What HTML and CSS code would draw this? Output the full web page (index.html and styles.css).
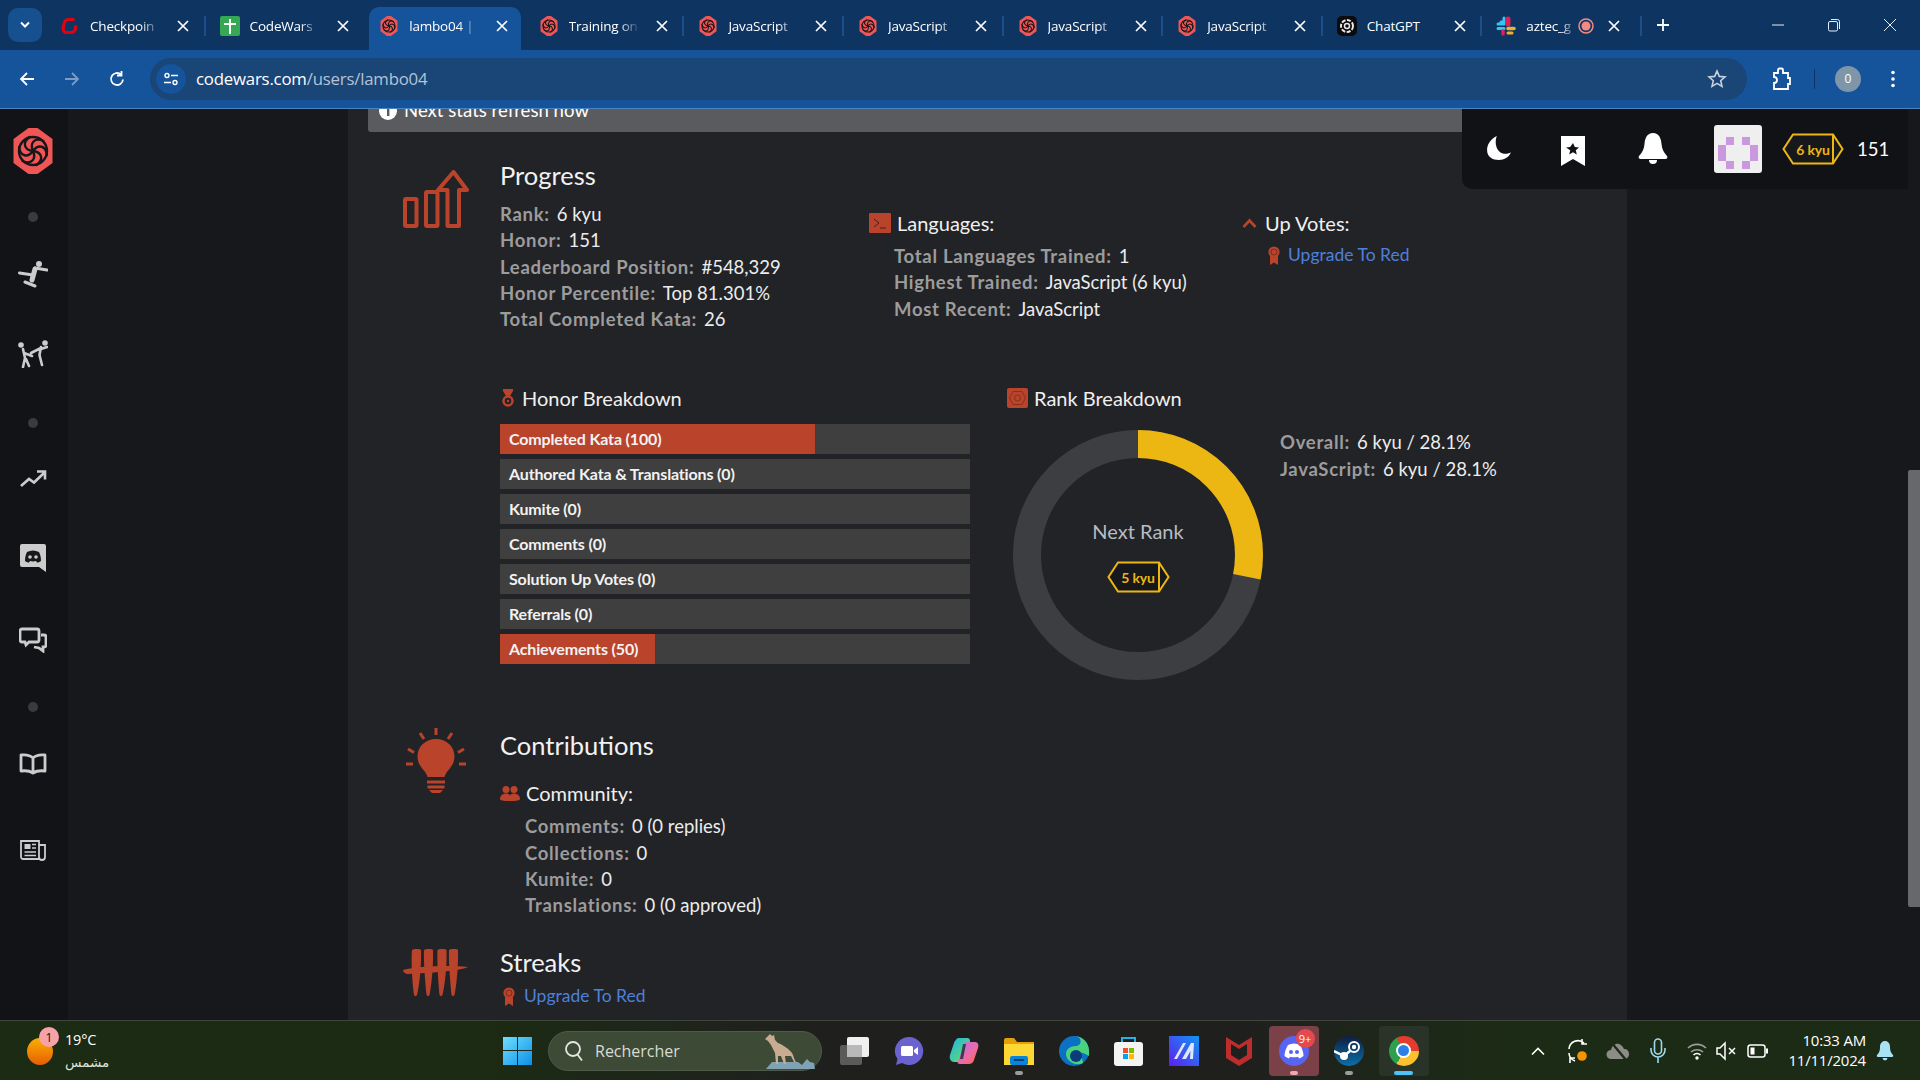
FILE: index.html
```html
<!DOCTYPE html>
<html lang="en">
<head>
<meta charset="utf-8">
<title>lambo04 | Codewars</title>
<link rel="stylesheet" href="styles.css">
</head>
<body>
<svg class="defs" aria-hidden="true">
  <symbol id="cw" viewBox="0 0 41 46">
    <polygon points="16,0 25,0 40,11 40,35 25,46 16,46 1,35 1,11" fill="#f05656"/>
    <g fill="none" stroke="#17171a" stroke-width="2.4" stroke-linecap="round">
      <circle cx="20.5" cy="23" r="14"/>
      <path d="M20.5 23C17 15 22 9 31 13"/>
      <path d="M20.5 23C17 15 22 9 31 13" transform="rotate(60 20.5 23)"/>
      <path d="M20.5 23C17 15 22 9 31 13" transform="rotate(120 20.5 23)"/>
      <path d="M20.5 23C17 15 22 9 31 13" transform="rotate(180 20.5 23)"/>
      <path d="M20.5 23C17 15 22 9 31 13" transform="rotate(240 20.5 23)"/>
      <path d="M20.5 23C17 15 22 9 31 13" transform="rotate(300 20.5 23)"/>
    </g>
  </symbol>
  <symbol id="x" viewBox="0 0 14 14">
    <path d="M2 2l10 10M12 2L2 12" stroke="#fff" stroke-width="1.7" fill="none"/>
  </symbol>
  <symbol id="ribbon" viewBox="0 0 12 19">
    <path d="M2 10v9l4-2.5 4 2.5v-9z" fill="#b9432b"/>
    <circle cx="6" cy="6" r="5.6" fill="#b9432b"/>
    <circle cx="6" cy="6" r="3" fill="none" stroke="#7c2c1d" stroke-width="1"/>
  </symbol>
</svg>

<div class="screen">
  <div class="tabstrip">
    <div class="tablist"><svg width="12" height="8" viewBox="0 0 12 8"><path d="M2 1.5l4 4 4-4" fill="none" stroke="#fff" stroke-width="2"/></svg></div>
    <div class="tab">
      <svg class="fav" viewBox="0 0 20 20"><path d="M14.5 3.5H9C6 3.5 4.500 5 4 8l-.8 4c-.5 3 1 4.500 3.800 4.500h4c2.500 0 3.800-1.200 4.300-3.500l.7-3.500" fill="none" stroke="#e3000f" stroke-width="3.200"/></svg>
      <span class="tab-title">Checkpoin</span><svg class="close"><use href="#x"/></svg><i class="sep"></i>
    </div>
    <div class="tab">
      <svg class="fav" viewBox="0 0 20 20"><rect width="20" height="20" rx="2" fill="#34a853"/><path d="M10 3v15M4 8h12" stroke="#fff" stroke-width="2"/></svg>
      <span class="tab-title">CodeWars</span><svg class="close"><use href="#x"/></svg><i class="sep sep-off"></i>
    </div>
    <div class="tab tab-active">
      <svg class="fav"><use href="#cw"/></svg>
      <span class="tab-title">lambo04 |</span><svg class="close"><use href="#x"/></svg><i class="sep sep-off"></i>
    </div>
    <div class="tab">
      <svg class="fav"><use href="#cw"/></svg>
      <span class="tab-title">Training on</span><svg class="close"><use href="#x"/></svg><i class="sep"></i>
    </div>
    <div class="tab">
      <svg class="fav"><use href="#cw"/></svg>
      <span class="tab-title">JavaScript</span><svg class="close"><use href="#x"/></svg><i class="sep"></i>
    </div>
    <div class="tab">
      <svg class="fav"><use href="#cw"/></svg>
      <span class="tab-title">JavaScript</span><svg class="close"><use href="#x"/></svg><i class="sep"></i>
    </div>
    <div class="tab">
      <svg class="fav"><use href="#cw"/></svg>
      <span class="tab-title">JavaScript</span><svg class="close"><use href="#x"/></svg><i class="sep"></i>
    </div>
    <div class="tab">
      <svg class="fav"><use href="#cw"/></svg>
      <span class="tab-title">JavaScript</span><svg class="close"><use href="#x"/></svg><i class="sep"></i>
    </div>
    <div class="tab">
      <svg class="fav" viewBox="0 0 20 20"><rect width="20" height="20" rx="5" fill="#0b0b0b"/><circle cx="10" cy="10" r="6" fill="none" stroke="#e8e8e8" stroke-width="2" stroke-dasharray="4 1.500"/><circle cx="10" cy="10" r="2.500" fill="none" stroke="#e8e8e8" stroke-width="1.500"/></svg>
      <span class="tab-title tab-title-full">ChatGPT</span><svg class="close"><use href="#x"/></svg><i class="sep"></i>
    </div>
    <div class="tab tab-narrow">
      <svg class="fav" viewBox="0 0 20 20"><path d="M8 2v4H5" fill="none" stroke="#36c5f0" stroke-width="3" stroke-linecap="round"/><path d="M2 8h6M2 12.500h6" stroke="#36c5f0" stroke-width="3" stroke-linecap="round"/><path d="M12 3v5" stroke="#e01e5a" stroke-width="5" stroke-linecap="round"/><path d="M12 12.500h6" stroke="#ecb22e" stroke-width="3.500" stroke-linecap="round"/><path d="M12 17h4" stroke="#ecb22e" stroke-width="3" stroke-linecap="round"/><path d="M7 15v3" stroke="#e01e5a" stroke-width="3.500" stroke-linecap="round"/></svg>
      <span class="tab-title tab-title-short">aztec_g</span>
      <svg class="rec" viewBox="0 0 16 16"><circle cx="8" cy="8" r="7" fill="none" stroke="#f28b82" stroke-width="1.500"/><circle cx="8" cy="8" r="4.500" fill="#f28b82"/></svg>
      <svg class="close"><use href="#x"/></svg><i class="sep"></i>
    </div>
    <svg class="plus" viewBox="0 0 14 14"><path d="M7 1v12M1 7h12" stroke="#fff" stroke-width="1.800"/></svg>
    <div class="winctl">
      <svg width="14" height="14" viewBox="0 0 14 14"><path d="M1 7h12" stroke="#e8edf3" stroke-width="1"/></svg>
      <svg width="14" height="14" viewBox="0 0 14 14"><rect x="1.500" y="3.500" width="9" height="9.500" rx="1.500" fill="none" stroke="#e8edf3"/><path d="M4 1.500h6.500a2 2 0 0 1 2 2V11" fill="none" stroke="#e8edf3"/></svg>
      <svg width="14" height="14" viewBox="0 0 14 14"><path d="M1 1l12 12M13 1L1 13" stroke="#e8edf3" stroke-width="1"/></svg>
    </div>
  </div>

  <div class="toolbar">
    <div class="navbtns">
      <svg width="18" height="18" viewBox="0 0 18 18"><path d="M16 9H3M9 3L3 9l6 6" fill="none" stroke="#fff" stroke-width="1.800"/></svg>
      <svg width="18" height="18" viewBox="0 0 18 18"><path d="M2 9h13M9 3l6 6-6 6" fill="none" stroke="#7d9cc4" stroke-width="1.800"/></svg>
      <svg width="18" height="18" viewBox="0 0 18 18"><path d="M15 9.500A6 6 0 1 1 13 4.500M13.500 1v4.500H9" fill="none" stroke="#fff" stroke-width="1.800"/></svg>
    </div>
    <div class="omnibox">
      <span class="siteinfo"><svg width="16" height="16" viewBox="0 0 16 16"><circle cx="4" cy="4.500" r="2" fill="none" stroke="#fff" stroke-width="1.400"/><path d="M8 4.500h7M1 11.500h7" stroke="#fff" stroke-width="1.400"/><circle cx="12" cy="11.500" r="2" fill="none" stroke="#fff" stroke-width="1.400"/></svg></span>
      <span class="url"><span class="url-host">codewars.com</span>/users/lambo04</span>
      <svg class="star" width="20" height="20" viewBox="0 0 20 20"><path d="M10 2l2.300 5.400 5.700.5-4.300 3.800 1.300 5.700-5-3-5 3 1.300-5.700L2 7.900l5.700-.5z" fill="none" stroke="#c7d0dc" stroke-width="1.600"/></svg>
    </div>
    <svg class="puzzle" width="22" height="24" viewBox="0 0 22 24"><path d="M4 6h4V3a1.500 1.500 0 0 1 1.500-1.500h2A1.500 1.500 0 0 1 13 3v3h5v5h2v6h-2v5H4v-6a3 3 0 0 0 0-6z" fill="none" stroke="#fff" stroke-width="1.800"/></svg>
    <i class="tb-div"></i>
    <span class="profile">0</span>
    <svg class="kebab" width="6" height="20" viewBox="0 0 6 20"><circle cx="3" cy="3.500" r="1.800" fill="#fff"/><circle cx="3" cy="10" r="1.800" fill="#fff"/><circle cx="3" cy="16.500" r="1.800" fill="#fff"/></svg>
  </div>

  <div class="page">
    <nav class="rail">
      <svg class="logo"><use href="#cw"/></svg>
      <i class="dot"></i>
      <span class="slot"><svg width="30" height="28" viewBox="0 0 30 28"><circle cx="21" cy="4" r="3" fill="#ccc"/><path d="M17 9L14 20" fill="none" stroke="#ccc" stroke-width="5" stroke-linecap="round"/><path d="M1.500 13L15 15M7 22l10 4M17 8l12 2" fill="none" stroke="#ccc" stroke-width="3" stroke-linecap="round"/></svg></span>
      <span class="slot"><svg width="30" height="28" viewBox="0 0 30 28"><circle cx="3" cy="5" r="2.800" fill="#ccc"/><circle cx="27" cy="3" r="2.800" fill="#ccc"/><path d="M5 9l2 9-2 9M6 13l8 3M8 19l3 7M23 7l-1.500 8 2.500 10M23 8l-10 5M29 7l-6 2" fill="none" stroke="#ccc" stroke-width="2.600" stroke-linecap="round"/></svg></span>
      <i class="dot"></i>
      <span class="slot"><svg width="28" height="20" viewBox="0 0 28 20"><path d="M2 17l8-7 5 3.500L25 4M18 2.500h8v8" fill="none" stroke="#ccc" stroke-width="2.600"/></svg></span>
      <span class="slot"><svg width="28" height="30" viewBox="0 0 28 30"><path d="M3 1h22a2 2 0 0 1 2 2v26l-7-5H3a2 2 0 0 1-2-2V3a2 2 0 0 1 2-2z" fill="#ccc"/><path d="M8 9c4-2 8-2 12 0 1.500 3 2 6 2 9-1.500 1-3 1.500-4 1.500l-1-1.500c-2 .5-4 .5-6 0L10 19.500c-1 0-2.500-.5-4-1.500 0-3 .5-6 2-9z" fill="#17181c"/><circle cx="11" cy="14" r="1.800" fill="#ccc"/><circle cx="17" cy="14" r="1.800" fill="#ccc"/></svg></span>
      <span class="slot"><svg width="28" height="26" viewBox="0 0 28 26"><path d="M3 2h15a2 2 0 0 1 2 2v9a2 2 0 0 1-2 2H10l-3 3-1-3H3a2 2 0 0 1-2-2V4a2 2 0 0 1 2-2z" fill="none" stroke="#ccc" stroke-width="2.800"/><path d="M22 8h3a2 2 0 0 1 2 2v8a2 2 0 0 1-2 2h-1v4l-4-3-5-1" fill="none" stroke="#ccc" stroke-width="2.800"/></svg></span>
      <i class="dot"></i>
      <span class="slot"><svg width="28" height="22" viewBox="0 0 28 22"><path d="M14 5c-3-3-8-3.500-12-3v16c4-.5 9 0 12 2 3-2 8-2.500 12-2V2c-4-.5-9 0-12 3zM14 5v15" fill="none" stroke="#ccc" stroke-width="2.800" stroke-linejoin="round"/></svg></span>
      <span class="slot"><svg width="26" height="24" viewBox="0 0 26 24"><path d="M19 21H3a2 2 0 0 1-2-2V3h18v18zM19 7h6v12a2 2 0 0 1-6 0" fill="none" stroke="#ccc" stroke-width="1.800"/><rect x="4.500" y="6" width="6" height="5" fill="#ccc"/><path d="M12 6.500h4M12 10h4M4.500 14h11.500M4.500 17.500h11.500" stroke="#ccc" stroke-width="1.600"/></svg></span>
    </nav>
    <div class="gutter"></div>

    <main class="main">
      <div class="notice">
        <svg width="18" height="18" viewBox="0 0 18 18"><circle cx="9" cy="9" r="9" fill="#fff"/><rect x="8" y="7" width="2.400" height="7" fill="#5a5b5f"/><circle cx="9.200" cy="4.500" r="1.400" fill="#5a5b5f"/></svg>
        <span>Next stats refresh now</span>
      </div>

      <section class="section section-progress">
        <div class="sec-icon">
          <svg width="66" height="58" viewBox="0 0 66 58"><g fill="none" stroke="#b9432b" stroke-width="4" stroke-linejoin="round"><rect x="2" y="29" width="11.500" height="27" rx="1"/><rect x="23" y="22" width="11.500" height="34" rx="1"/><path d="M44.500 20H35L50.500 2 64 20H56v36H44.500z"/></g></svg>
        </div>
        <div>
          <h2 class="sec-title">Progress</h2>
          <div class="stats-row">
            <div class="col-main">
              <div class="stat"><b>Rank:</b>6 kyu</div>
              <div class="stat"><b>Honor:</b>151</div>
              <div class="stat"><b>Leaderboard Position:</b>#548,329</div>
              <div class="stat"><b>Honor Percentile:</b>Top 81.301%</div>
              <div class="stat"><b>Total Completed Kata:</b>26</div>
            </div>
            <div class="col-lang">
              <h3 class="sub-title"><svg width="22" height="20" viewBox="0 0 22 20"><rect width="22" height="20" rx="1" fill="#b9432b"/><path d="M5 6l5 4-5 4M11 15h6" fill="none" stroke="#46201a" stroke-width="1"/></svg>Languages:</h3>
              <div class="indent">
                <div class="stat"><b>Total Languages Trained:</b>1</div>
                <div class="stat"><b>Highest Trained:</b>JavaScript (6 kyu)</div>
                <div class="stat"><b>Most Recent:</b>JavaScript</div>
              </div>
            </div>
            <div class="col-votes">
              <h3 class="sub-title sub-votes"><svg width="15" height="10" viewBox="0 0 15 10"><path d="M1.500 9l6-6.500 6 6.500" fill="none" stroke="#b9432b" stroke-width="2.600"/></svg>Up Votes:</h3>
              <a class="upgrade upgrade-votes"><svg width="12" height="19"><use href="#ribbon"/></svg>Upgrade To Red</a>
            </div>
          </div>
        </div>
      </section>

      <section class="section section-break">
        <div></div>
        <div class="break-row">
          <div class="honor">
            <h3 class="sub-title sub-honor"><svg width="14" height="18" viewBox="0 0 14 18"><path d="M2 0h10v2L9 7H5L2 2z" fill="#b9432b"/><circle cx="7" cy="12" r="4.500" fill="none" stroke="#b9432b" stroke-width="2.500"/><circle cx="7" cy="12" r="1.200" fill="#b9432b"/></svg>Honor Breakdown</h3>
            <div class="bars">
              <div class="bar"><div class="fill fill-67">Completed Kata (100)</div></div>
              <div class="bar"><div class="fill fill-0">Authored Kata &amp; Translations (0)</div></div>
              <div class="bar"><div class="fill fill-0">Kumite (0)</div></div>
              <div class="bar"><div class="fill fill-0">Comments (0)</div></div>
              <div class="bar"><div class="fill fill-0">Solution Up Votes (0)</div></div>
              <div class="bar"><div class="fill fill-0">Referrals (0)</div></div>
              <div class="bar"><div class="fill fill-33">Achievements (50)</div></div>
            </div>
          </div>
          <div class="rank">
            <h3 class="sub-title"><svg width="21" height="20" viewBox="0 0 21 20"><rect width="21" height="20" rx="2" fill="#b9432b"/><path d="M6 3.500h9l3.500 6.500-3.500 6.500H6L2.500 10z" fill="none" stroke="#8a2f1e" stroke-width="1"/><circle cx="10.500" cy="10" r="3" fill="none" stroke="#8a2f1e" stroke-width="1"/></svg>Rank Breakdown</h3>
            <div class="rank-body">
              <div class="donut">
                <svg class="donut-ring" width="250" height="250" viewBox="0 0 250 250"><circle cx="125" cy="125" r="111" fill="none" stroke="#3d3e42" stroke-width="28"/><circle cx="125" cy="125" r="111" fill="none" stroke="#ecb613" stroke-width="28" stroke-dasharray="196 701" transform="rotate(-90 125 125)"/></svg>
                <div class="donut-center">
                  <div class="next">Next Rank</div>
                  <div class="kyu kyu-next">
                    <svg width="63" height="32" viewBox="0 0 63 32"><path d="M11 1.500H52L61.500 16 52 30.500H11L1.500 16z" fill="#17181c" stroke="#ecb613" stroke-width="2"/><path d="M52 1.500v29" stroke="#ecb613" stroke-width="2"/></svg>
                    <span>5 kyu</span>
                  </div>
                </div>
              </div>
              <div class="rank-stats">
                <div class="stat"><b>Overall:</b>6 kyu / 28.1%</div>
                <div class="stat"><b>JavaScript:</b>6 kyu / 28.1%</div>
              </div>
            </div>
          </div>
        </div>
      </section>

      <section class="section section-contrib">
        <div class="sec-icon">
          <svg width="66" height="66" viewBox="0 0 66 66"><g stroke="#b9432b" stroke-width="3" fill="none"><path d="M33 0v7M17 5l4 6M49 5l-4 6M5 21l6 3.500M61 21l-6 3.500M3 36h7M63 36h-7"/></g><path d="M33 11c10.500 0 18.500 7.500 18.500 17.500 0 6-3 10-6 13.500-2.500 3-3.500 5-4 7h-17c-.5-2-1.500-4-4-7-3-3.500-6-7.500-6-13.500C14.500 18.500 22.500 11 33 11z" fill="#b9432b"/><path d="M24 54h18M24.500 59h17" stroke="#b9432b" stroke-width="3"/><path d="M26 62h14l-3 3h-8z" fill="#b9432b"/></svg>
        </div>
        <div>
          <h2 class="sec-title">Contributions</h2>
          <h3 class="sub-title sub-comm"><svg width="20" height="16" viewBox="0 0 20 16"><circle cx="6" cy="4.500" r="3.500" fill="#b9432b"/><circle cx="14" cy="4.500" r="3.500" fill="#b9432b"/><path d="M0 14c0-3 2-5 5-5.500h2c2.500.5 3 2 3 2s.5-1.500 3-2h2c3 .5 5 2.500 5 5.500 0 1.500-3 2-10 2S0 15.500 0 14z" fill="#b9432b"/></svg>Community:</h3>
          <div class="indent">
            <div class="stat"><b>Comments:</b>0 (0 replies)</div>
            <div class="stat"><b>Collections:</b>0</div>
            <div class="stat"><b>Kumite:</b>0</div>
            <div class="stat"><b>Translations:</b>0 (0 approved)</div>
          </div>
        </div>
      </section>

      <section class="section section-streaks">
        <div class="sec-icon sec-icon-tally">
          <svg width="66" height="48" viewBox="0 0 66 48"><g fill="#b9432b"><path d="M9 1c3-1.500 7-1.500 9 0 .5 12-1 32-4 45-1 1.500-2 1.500-3 0C9 32 8 12 9 1z"/><path d="M21 1c3-1.500 7-1.500 9 0 .5 12-1 32-3.500 45-1 1.500-2 1.500-3 0C22 32 20.500 12 21 1z"/><path d="M34.500 1c3-1.500 7-1.500 9 0 .5 12-1 32-4 45-1 1.500-2 1.500-3 0C35 32 34 12 34.500 1z"/><path d="M46 1c3-1.500 7-1.500 9 0 .5 12-1 32-3.500 45-1 1.500-2 1.500-3 0C47 32 45.500 12 46 1z"/><path d="M0 21C15 17 45 16 65 18c-8 4-40 6-60 7-3 0-5-2-5-4z"/></g></svg>
        </div>
        <div>
          <h2 class="sec-title">Streaks</h2>
          <a class="upgrade upgrade-streaks"><svg width="12" height="19"><use href="#ribbon"/></svg>Upgrade To Red</a>
        </div>
      </section>
    </main>

    <div class="gutter gutter-right"></div>
    <div class="scrollbar"><div class="thumb"></div></div>

    <div class="userpanel">
      <svg width="26" height="26" viewBox="0 0 24 24"><path d="M10 1C4 4 1 9 1 14c0 6 5 9 11 9 5 0 9-2 11-7-3 2-8 2-11-1C9 12 8 6 10 1z" fill="#fff"/></svg>
      <svg class="up-book" width="24" height="30" viewBox="0 0 24 30"><path d="M0 0h24v30l-12-7-12 7z" fill="#fff"/><path d="M12 7l1.800 4 4.200.4-3.200 2.800 1 4.300-3.800-2.300-3.800 2.300 1-4.300L5 11.400l4.200-.4z" fill="#111216"/></svg>
      <svg class="up-bell" width="30" height="32" viewBox="0 0 30 32"><path d="M15 0c6 0 8 5 8.500 11 .5 5 2 8 5.500 12 1 1.500 0 3-1.500 3h-25C1 26 0 24.500 1 23c3.500-4 5-7 5.500-12C7 5 9 0 15 0z" fill="#fff"/><path d="M11 27h8a4 4 0 0 1-8 0z" fill="#fff"/></svg>
      <div class="avatar">
        <i class="px px-a"></i><i class="px px-b"></i><i class="px px-c"></i><i class="px px-d"></i><i class="px px-e"></i><i class="px px-f"></i>
      </div>
      <div class="kyu kyu-user">
        <svg width="62" height="32" viewBox="0 0 62 32"><path d="M11 1.500H51L60.500 16 51 30.500H11L1.500 16z" fill="#17181c" stroke="#ecb613" stroke-width="2"/><path d="M51 1.500v29" stroke="#ecb613" stroke-width="2"/></svg>
        <span>6 kyu</span>
      </div>
      <span class="honor-num">151</span>
    </div>
  </div>

  <footer class="taskbar">
    <div class="weather">
      <div class="wx-icon"><span class="wx-badge">1</span></div>
      <div class="wx-text"><span>19°C</span><span class="wx-ar">مشمس</span></div>
    </div>
    <svg class="winlogo" width="29" height="29" viewBox="0 0 29 29"><defs><linearGradient id="w" x1="0" y1="0" x2="1" y2="1"><stop offset="0" stop-color="#6fe0ff"/><stop offset="1" stop-color="#0d8fe8"/></linearGradient></defs><path d="M0 1h14v13H0zM15 1h14v13H15zM0 15h14v14H0zM15 15h14v14H15z" fill="url(#w)"/></svg>
    <div class="search">
      <svg width="20" height="22" viewBox="0 0 20 22"><circle cx="9" cy="9" r="7" fill="none" stroke="#e5e8e1" stroke-width="1.800"/><path d="M13.500 14.500l4.500 6" stroke="#e5e8e1" stroke-width="1.800"/></svg>
      <span class="search-text">Rechercher</span>
      <svg class="wolf" width="50" height="38" viewBox="0 0 50 38"><path d="M1 37l6-7h26l4 3 5-6 3 3 4 1 1 6z" fill="#7fa3b5"/><path d="M5 2l2 2 2-1 1 5 3 3c5 2 11 6 14 10 2 3 2 7 4 9h-2l-3-6-6 0 1 8h-2l-3-8-3 0 0 8h-2l-1-11-4-8-3-4-3-2z" fill="#c8ab90"/></svg>
    </div>
    <div class="apps">
      <span class="app"><svg width="30" height="30" viewBox="0 0 30 30"><rect x="1" y="9" width="22" height="20" rx="2" fill="#5b5b5b"/><rect x="8" y="1" width="22" height="20" rx="2" fill="#f0f0f0"/><rect x="8" y="9" width="15" height="12" fill="#b9b9b9"/></svg></span>
      <span class="app"><svg width="30" height="30" viewBox="0 0 30 30"><path d="M15 1a14 14 0 1 1-7 26l-6 2 1.500-6A14 14 0 0 1 15 1z" fill="#6a63cf"/><rect x="7" y="10" width="12" height="10" rx="1.500" fill="#fff"/><path d="M20 14l4-3v8l-4-3z" fill="#fff"/></svg></span>
      <span class="app"><svg width="30" height="30" viewBox="0 0 30 30"><defs><linearGradient id="cpa" x1="0" y1="0" x2="1" y2="1"><stop offset="0" stop-color="#20b0f0"/><stop offset=".6" stop-color="#4bd28f"/><stop offset="1" stop-color="#f4c21f"/></linearGradient><linearGradient id="cpb" x1="0" y1="0" x2="1" y2="1"><stop offset="0" stop-color="#b06ff0"/><stop offset=".6" stop-color="#f06aa0"/><stop offset="1" stop-color="#f26a32"/></linearGradient></defs><path d="M10 2h8c2 0 3 1 3 3l-5 19c-.5 1.500-2 2-3 2H5c-3 0-5-3-4-7L5 7c1-3 3-5 5-5z" fill="url(#cpa)"/><path d="M16 6h10c3 0 4 3 3 6l-4 12c-1 3-3 4-5 4h-9c-2 0-3-1-2-3z" fill="url(#cpb)"/><path d="M14 8h3l-3 15h-3z" fill="#1e2a30" opacity=".8"/></svg></span>
      <span class="app"><svg width="30" height="28" viewBox="0 0 30 28"><path d="M0 3a2 2 0 0 1 2-2h8l3 4h17v5H0z" fill="#e3a008"/><path d="M0 7h30v21H0z" fill="#fdd835"/><rect x="6" y="19" width="18" height="9" rx="2" fill="#0a84d6"/><rect x="10" y="22" width="10" height="2" fill="#073f78"/></svg><i class="pip"></i></span>
      <span class="app"><svg width="30" height="30" viewBox="0 0 30 30"><circle cx="15" cy="15" r="15" fill="#0c71c3"/><path d="M30 15c0-8-6-15-15-15C24 0 23 10 17 10c-8 0-12 6-9 12 3 5 10 8 16 5l-1-5c-5 3-9 0-8-3 1-3 8-4 15 1z" fill="#4ad37c"/><circle cx="17" cy="20" r="6" fill="#0a3d7a"/></svg></span>
      <span class="app"><svg width="29" height="30" viewBox="0 0 29 30"><rect x="0" y="6" width="29" height="24" rx="3" fill="#f4f4f4"/><path d="M8 6V2h13v4" fill="none" stroke="#22b3e6" stroke-width="2"/><rect x="9" y="12" width="5" height="5" fill="#f25022"/><rect x="15" y="12" width="5" height="5" fill="#7fba00"/><rect x="9" y="18" width="5" height="5" fill="#00a4ef"/><rect x="15" y="18" width="5" height="5" fill="#ffb900"/></svg></span>
      <span class="app"><svg width="30" height="30" viewBox="0 0 30 30"><defs><linearGradient id="mg" x1="0" y1="1" x2="1" y2="0"><stop offset="0" stop-color="#5f1cf5"/><stop offset="1" stop-color="#1296f0"/></linearGradient></defs><rect width="30" height="30" fill="url(#mg)"/><path d="M5 23l9-16h3L8 23zM13 23l9-16h3l-1 16h-3l.5-8-4.500 8z" fill="#dfe7ff"/></svg></span>
      <span class="app"><svg width="28" height="30" viewBox="0 0 28 30"><path d="M1 1l6.500 4L14 9l6.500-4L27 1v21l-13 8-13-8zM6 8v11l8 5 8-5V8l-8 5z" fill="#bd2d2b" fill-rule="evenodd"/></svg></span>
      <span class="app app-box app-discord">
        <span class="discord-mark"><svg width="20" height="16" viewBox="0 0 20 16"><path d="M4 2c4-2 8-2 12 0 2 3 3.500 7 3.500 11-1.500 1.200-3 2-4.500 2.500l-1-1.800c-3 .8-5 .8-8 0l-1 1.800C3.500 15 2 14.200.5 13 .5 9 2 5 4 2z" fill="#fff"/><circle cx="7" cy="9" r="2" fill="#5865f2"/><circle cx="13" cy="9" r="2" fill="#5865f2"/></svg></span>
        <span class="discord-badge">9+</span>
        <i class="pip pip-pink"></i>
      </span>
      <span class="app app-steam"><svg width="30" height="30" viewBox="0 0 30 30"><defs><linearGradient id="st" x1="0" y1="0" x2="0" y2="1"><stop offset="0" stop-color="#0f1e42"/><stop offset="1" stop-color="#0b6fa8"/></linearGradient></defs><circle cx="15" cy="15" r="15" fill="url(#st)"/><circle cx="20" cy="11" r="5" fill="none" stroke="#fff" stroke-width="2"/><circle cx="20" cy="11" r="2.200" fill="#fff"/><circle cx="10" cy="20" r="4" fill="#fff"/><path d="M0 15l10 5 6-5" stroke="#fff" stroke-width="2.500" fill="none"/></svg><i class="pip"></i></span>
      <span class="app app-box app-chrome"><span class="chrome"><span class="chrome-eye"></span></span><i class="pip pip-blue"></i></span>
    </div>
    <div class="tray">
      <span class="tray-i"><svg width="14" height="10" viewBox="0 0 14 10"><path d="M1 8.500l6-6 6 6" fill="none" stroke="#fff" stroke-width="1.600"/></svg></span>
      <span class="tray-i"><svg width="24" height="26" viewBox="0 0 24 26"><path d="M3 11A9 9 0 0 1 18 5M16 1v5h5M3 15a9 9 0 0 0 6 8M4 25v-5h5" fill="none" stroke="#fff" stroke-width="1.600"/><circle cx="16" cy="18" r="4.800" fill="#f59300"/></svg></span>
      <span class="tray-i"><svg width="24" height="20" viewBox="0 0 24 20"><path d="M5 18a4.500 4.500 0 0 1 0-9C6 4 10 2 13 3c3 1 4 3 5 5 3 0 5 2 5 5s-2 5-5 5z" fill="#8b8e86"/><path d="M5 1l15 18" stroke="#22291c" stroke-width="2.400"/></svg></span>
      <span class="tray-i"><svg width="16" height="26" viewBox="0 0 16 26"><rect x="4.500" y="1" width="7" height="15" rx="3.500" fill="none" stroke="#9fd9ef" stroke-width="1.600"/><path d="M1 10v2a7 7 0 0 0 14 0v-2M8 19v6" fill="none" stroke="#9fd9ef" stroke-width="1.600"/></svg></span>
      <span class="tray-i tray-narrow"><svg width="20" height="20" viewBox="0 0 20 20"><path d="M1 7a13 13 0 0 1 18 0M4 11a9 9 0 0 1 12 0" fill="none" stroke="#9aa097" stroke-width="1.600"/><path d="M6.500 14a5 5 0 0 1 7 0" fill="none" stroke="#fff" stroke-width="1.600"/><circle cx="10" cy="17" r="1.700" fill="#fff"/></svg></span>
      <span class="tray-i tray-narrow"><svg width="22" height="20" viewBox="0 0 22 20"><path d="M1 7h3l5-5v16l-5-5H1z" fill="none" stroke="#fff" stroke-width="1.500"/><path d="M13 7l6 6M19 7l-6 6" stroke="#fff" stroke-width="1.500"/></svg></span>
      <span class="tray-i tray-narrow"><svg width="22" height="14" viewBox="0 0 22 14"><rect x="1" y="1" width="17" height="12" rx="2.500" fill="none" stroke="#fff" stroke-width="1.500"/><rect x="3.500" y="3.500" width="4" height="7" fill="#fff"/><rect x="19" y="4.500" width="2" height="5" fill="#fff"/></svg></span>
      <div class="clock"><span>10:33 AM</span><span>11/11/2024</span></div>
      <svg class="tray-bell" width="18" height="20" viewBox="0 0 18 20"><path d="M9 0c3 0 5 2.500 5 6 0 4 1 6 3 8 .5 1 0 2-1 2H2c-1 0-1.500-1-1-2 2-2 3-4 3-8 0-3.500 2-6 5-6z" fill="#a8e3f5"/><path d="M6.500 17h5a2.500 2.500 0 0 1-5 0z" fill="#a8e3f5"/></svg>
    </div>
  </footer>
</div>
</body>
</html>
```
FILE: styles.css
```css
* { box-sizing: border-box; }
html, body { margin: 0; padding: 0; height: 1080px; overflow: hidden; background: #17181c; }
body { font-family: Lato, "Open Sans", sans-serif; }
.defs { position: absolute; width: 0; height: 0; }
.screen { display: flex; flex-direction: column; width: 1920px; height: 1080px; }

/* browser tab strip */
.tabstrip { height: 50px; flex: none; display: flex; align-items: flex-end; background: #0e3562; padding-left: 8px; font-family: "Open Sans", "Noto Sans", sans-serif; color: #fff; }
.tablist { width: 34px; height: 34px; margin: 0 4px 8px 0; border-radius: 10px; background: #16508f; display: flex; align-items: center; justify-content: center; }
.tab { width: 159.6px; height: 43px; display: flex; align-items: center; padding: 0 0 6px 14px; flex: none; border-radius: 10px 10px 0 0; }
.tab-active { width: 151.6px; margin: 0 4px; padding-left: 10px; background: #15539a; }
.fav { width: 20px; height: 20px; flex: none; }
.tab-title { width: 71px; margin-left: 10px; font-size: 13.5px; letter-spacing: -0.2px; white-space: nowrap; overflow: hidden; -webkit-mask-image: linear-gradient(90deg, #000 70%, transparent); mask-image: linear-gradient(90deg, #000 70%, transparent); }
.tab-title-full { -webkit-mask-image: none; mask-image: none; }
.tab-title-short { width: 50px; }
.rec { width: 16px; height: 16px; margin-left: 2px; flex: none; }
.close { width: 14px; height: 14px; margin-left: 15px; flex: none; }
.tab-narrow .close { margin-left: 13px; }
.sep { width: 2px; height: 20px; margin-left: auto; background: #1b4f8c; flex: none; }
.sep-off { background: transparent; }
.plus { width: 14px; height: 14px; margin: 0 0 18px 14px; flex: none; }
.winctl { margin-left: 101px; display: flex; gap: 42px; padding-bottom: 18px; }

/* browser toolbar */
.toolbar { height: 59px; flex: none; display: flex; align-items: center; background: #15539a; border-bottom: 1px solid #4c82bd; padding: 0 0 1px 0; }
.navbtns { width: 150px; padding-left: 18px; display: flex; gap: 27px; }
.omnibox { width: 1597px; height: 42px; border-radius: 21px; background: #1a4577; display: flex; align-items: center; padding-left: 6px; }
.siteinfo { width: 30px; height: 30px; border-radius: 50%; background: #15539a; display: flex; align-items: center; justify-content: center; }
.url { margin-left: 10px; font-family: "Open Sans", sans-serif; font-size: 16.800px; letter-spacing: -0.2px; color: #b5c3d4; }
.url-host { color: #fff; }
.star { margin-left: auto; margin-right: 20px; }
.puzzle { margin-left: 23px; }
.tb-div { width: 1px; height: 20px; background: #0e3562; margin-left: 22px; }
.profile { width: 26px; height: 26px; margin-left: 20px; border-radius: 50%; background: #7f96a9; color: #fff; font: 12px "Open Sans", sans-serif; display: flex; align-items: center; justify-content: center; }
.kebab { margin-left: 29px; }

/* page */
.page { position: relative; flex: 1; min-height: 0; display: flex; overflow: hidden; background: #17181c; }
.rail { width: 68px; flex: none; background: #121317; display: flex; flex-direction: column; align-items: center; padding: 19px 2px 0 0; }
.logo { width: 42px; height: 46px; flex: none; }
.dot { width: 10px; height: 10px; border-radius: 50%; background: #3a3b3e; flex: none; margin-top: 38px; }
.slot { width: 40px; height: 40px; flex: none; display: flex; align-items: center; justify-content: center; margin-top: 32px; }
.rail > :nth-child(4) { margin-top: 40px; }
.rail > :nth-child(5) { margin-top: 44px; }
.rail > :nth-child(6) { margin-top: 31px; }
.rail > :nth-child(7) { margin-top: 39px; }
.rail > :nth-child(8) { margin-top: 42px; }
.rail > :nth-child(9) { margin-top: 42px; }
.rail > :nth-child(10) { margin-top: 32px; }
.rail > :nth-child(11) { margin-top: 46px; }
.gutter { width: 280px; flex: none; background: #17181c; }
.gutter-right { width: 281px; }
.main { width: 1279px; flex: none; background: #222327; padding-left: 20px; overflow: hidden; color: #f0f0f0; }
.notice { height: 23px; border-radius: 0 0 3px 3px; background: #5a5b5f; display: flex; align-items: flex-end; gap: 7px; padding-left: 11px; font-size: 18.600px; line-height: 18px; padding-bottom: 13px; color: #fff; overflow: visible; }
.notice svg { flex: none; margin-bottom: -1px; }

.section { display: grid; grid-template-columns: 132px 1fr; }
.sec-icon { display: flex; justify-content: center; padding-left: 3px; }
.section-progress { margin-top: 28px; }
.section-progress .sec-icon { padding-top: 10px; }
.section-break { margin-top: 53px; }
.section-contrib { margin-top: 50px; }
.section-contrib .sec-icon { margin-top: -2px; }
.section-streaks { margin-top: 29px; }
.sec-icon-tally { padding-top: 2px; }

.sec-title { margin: 0; font-size: 25.500px; line-height: 30px; font-weight: 400; color: #f2f2f2; }
.sub-title { margin: 0; display: flex; align-items: center; gap: 6px; font-size: 20px; line-height: 26px; font-weight: 400; color: #f0f0f0; }
.sub-comm { margin-top: 20px; }
.stat { font-size: 18.500px; line-height: 26.250px; white-space: nowrap; color: #ededed; }
.stat b { font-weight: 700; color: #9c9c9c; letter-spacing: 0.7px; margin-right: 7px; }

.stats-row { display: flex; margin-top: 11px; }
.col-main { width: 369px; flex: none; }
.col-lang { width: 373px; flex: none; padding-top: 9px; }
.col-votes { padding-top: 9px; }
.indent { padding-left: 25px; margin-top: 7px; }
.sub-votes { gap: 8px; }
.upgrade { display: flex; align-items: center; font-size: 17.500px; line-height: 26px; color: #4e80d9; }
.upgrade-votes { margin: 6px 0 0 26px; gap: 8px; }
.upgrade-streaks { margin: 6px 0 0 3px; gap: 9px; }

.break-row { display: flex; }
.honor { width: 470px; flex: none; margin-right: 37px; }
.sub-honor { padding-left: 1px; gap: 7px; }
.bars { margin-top: 13px; display: flex; flex-direction: column; gap: 5px; }
.bar { height: 30px; background: #3f3f3f; }
.fill { height: 30px; padding-left: 9px; font-size: 16px; font-weight: 700; line-height: 30px; letter-spacing: -0.15px; color: #f2f2f2; white-space: nowrap; }
.fill-67 { width: 67%; background: #b9432b; }
.fill-33 { width: 33%; background: #b9432b; }
.fill-0 { width: 0; }

.rank-body { display: flex; margin-top: 18px; }
.donut { width: 250px; height: 250px; margin: 1px 0 0 6px; display: grid; flex: none; }
.donut-ring, .donut-center { grid-area: 1 / 1; }
.donut-center { display: flex; flex-direction: column; align-items: center; padding-top: 88px; }
.next { font-size: 20px; line-height: 26px; color: #b6bcc4; }
.kyu { display: grid; place-items: center; }
.kyu > * { grid-area: 1 / 1; }
.kyu span { color: #ecb613; font-size: 14px; font-weight: 700; letter-spacing: -0.2px; position: relative; }
.kyu-next { margin-top: 17px; }
.rank-stats { margin-left: 17px; }

.scrollbar { width: 12px; flex: none; padding-top: 361px; background: #17181c; }
.thumb { height: 437px; background: #67686b; border-radius: 2px 0 0 2px; }

/* floating user panel */
.userpanel { position: absolute; top: 0; left: 1462px; width: 446px; height: 80px; background: #111216; border-radius: 0 0 0 10px; display: flex; align-items: center; padding-left: 24px; color: #fff; }
.userpanel > svg:first-child { margin-top: -3px; }
.up-book { margin: 4px 0 0 49px; }
.up-bell { margin-left: 53px; }
.avatar { width: 48px; height: 48px; margin-left: 46px; border-radius: 3px; background: #f0eff0; display: grid; grid-template-columns: repeat(5, 8px); grid-template-rows: repeat(5, 8px); padding: 12px 0 0 4px; flex: none; }
.px { background: #c998de; display: block; }
.px-a { grid-area: 1 / 2; }
.px-b { grid-area: 1 / 4; }
.px-c { grid-area: 2 / 1 / 4 / 2; }
.px-d { grid-area: 2 / 5 / 4 / 6; }
.px-e { grid-area: 4 / 2; }
.px-f { grid-area: 4 / 4; }
.kyu-user { margin-left: 20px; flex: none; }
.honor-num { margin-left: 13px; font-size: 18.500px; }

/* windows taskbar */
.taskbar { height: 60px; flex: none; display: flex; align-items: center; border-top: 1px solid #41463c; background: linear-gradient(90deg, #1c2b14 0%, #1c2b14 25%, #1f201e 42%, #1f201e 65%, #1c2b15 78%, #1c2b15 100%); color: #fff; font-family: "Open Sans", sans-serif; padding-left: 27px; }
.weather { width: 476px; flex: none; display: flex; align-items: center; }
.wx-icon { width: 26px; height: 27px; margin-top: 2px; border-radius: 50%; background: linear-gradient(180deg, #f9b000, #e85d04); position: relative; flex: none; }
.wx-badge { position: absolute; left: 12px; top: -11px; width: 20px; height: 20px; border-radius: 50%; background: #f7a1a8; color: #111; font-size: 12px; display: flex; align-items: center; justify-content: center; }
.wx-text { margin-left: 12px; display: flex; flex-direction: column; font-size: 14.500px; line-height: 17px; gap: 6px; letter-spacing: -0.2px; }
.wx-ar { font-family: "DejaVu Sans", sans-serif; font-size: 13.500px; color: #dfe3da; }
.winlogo { flex: none; }
.search { width: 274px; height: 40px; margin-left: 16px; border-radius: 20px; border: 1px solid #50594a; background: #3d4a35; display: flex; align-items: center; padding-left: 15px; flex: none; }
.search-text { margin-left: 11px; font-size: 16px; color: #d8dcd4; }
.wolf { margin-left: auto; margin-right: 6px; }
.apps { display: flex; margin-left: 4px; flex: none; }
.app { width: 55px; height: 50px; position: relative; display: flex; align-items: center; justify-content: center; flex: none; }
.app-box { width: 50px; margin: 0 2.500px; border-radius: 4px; }
.app-discord { background: #7a4248; }
.discord-mark { width: 30px; height: 30px; border-radius: 50%; background: #5865f2; display: flex; align-items: center; justify-content: center; }
.discord-badge { position: absolute; top: 3px; left: 27px; width: 19px; height: 19px; border-radius: 50%; background: #e5484d; color: #fff; font-size: 11px; display: flex; align-items: center; justify-content: center; }
.app-chrome { background: #2a3327; }
.chrome { width: 30px; height: 30px; border-radius: 50%; background: conic-gradient(from -30deg, #e33b2e 0 120deg, #fbc02d 120deg 240deg, #2e9e4f 240deg 360deg); display: flex; align-items: center; justify-content: center; }
.chrome-eye { width: 15px; height: 15px; border-radius: 50%; background: #2f7ee6; border: 2px solid #fff; }
.pip { position: absolute; bottom: 1px; left: 50%; margin-left: -4px; width: 8px; height: 4px; border-radius: 2px; background: #9b9b9b; }
.pip-pink { background: #f2a6ae; }
.pip-blue { width: 19px; margin-left: -10px; background: #4fc3f7; }
.tray { display: flex; align-items: center; margin-left: 86.500px; }
.tray-i { width: 40px; display: flex; justify-content: center; flex: none; }
.tray-narrow { width: 30.500px; }
.tray-i:nth-child(5) { margin-left: 4px; }
.clock { width: 93px; display: flex; flex-direction: column; align-items: flex-end; font-size: 15px; line-height: 19.500px; letter-spacing: -0.2px; flex: none; }
.tray-bell { margin-left: 10px; flex: none; }
```
